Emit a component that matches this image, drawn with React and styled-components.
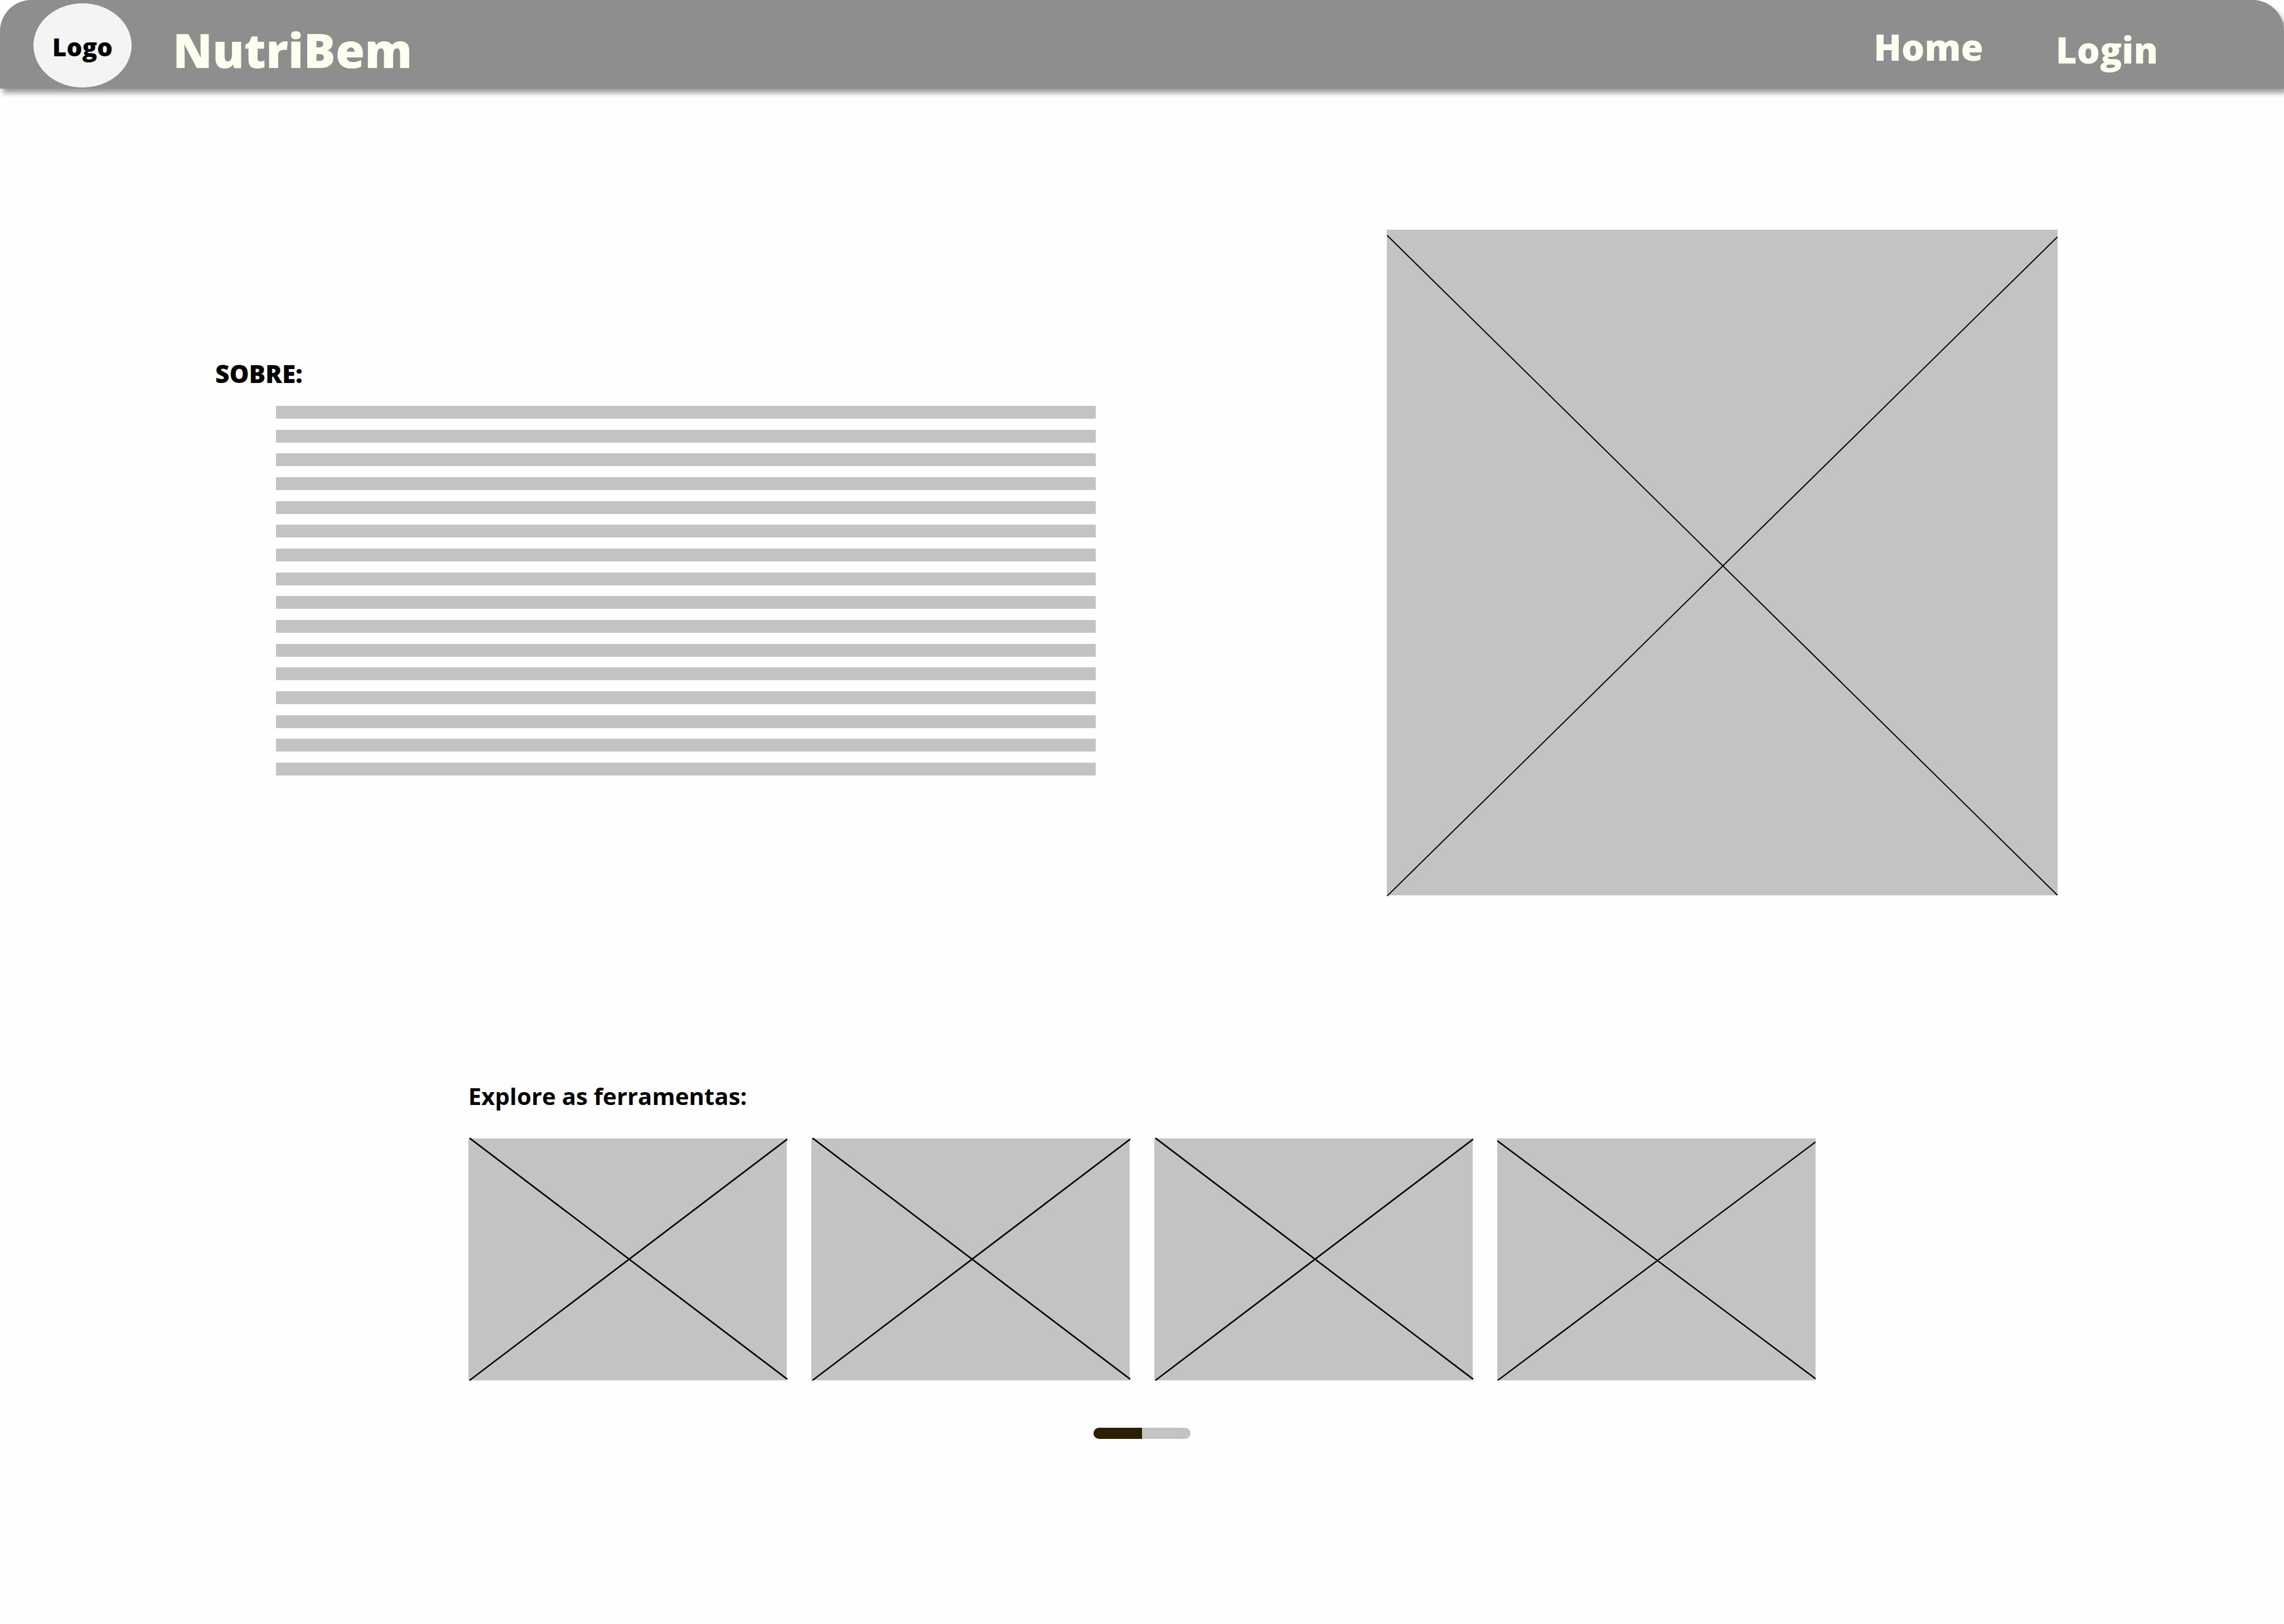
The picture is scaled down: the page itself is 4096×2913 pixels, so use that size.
import React from "react";
import styled, { createGlobalStyle } from "styled-components";

const GlobalStyle = createGlobalStyle`
  * { box-sizing: border-box; }
  body {
    margin: 0;
    background: #fefefe;
    color: #000;
    font-family: "Open Sans", "Noto Sans", sans-serif;
  }
`;

const Page = styled.div`
  display: flex;
  flex-direction: column;
  min-height: 100vh;
  overflow-x: hidden;
`;

const Header = styled.header`
  display: flex;
  align-items: center;
  height: 159px;
  padding: 3px 226px 0 60px;
  background: #8e8e8e;
  border-radius: 56px 56px 0 0;
  box-shadow: 5px 8px 8px rgba(0, 0, 0, 0.38);
`;

const Logo = styled.a`
  display: flex;
  align-items: center;
  justify-content: center;
  width: 176px;
  height: 151px;
  padding-top: 5px;
  border-radius: 50%;
  background: #f4f4f4;
  color: #000;
  font-size: 44px;
  font-weight: 800;
  text-decoration: none;
`;

const Brand = styled.h1`
  margin: 0 auto 0 74px;
  padding-top: 16px;
  color: #fffff0;
  font-size: 85px;
  line-height: 100px;
  font-weight: 800;
`;

const Nav = styled.nav`
  display: flex;
  align-items: center;
  gap: 130px;
`;

const NavLink = styled.a`
  padding-top: ${(p) => (p.$low ? "16px" : "5px")};
  color: #fffff0;
  font-size: 65px;
  line-height: 80px;
  font-weight: 800;
  text-decoration: none;
`;

const Hero = styled.section`
  display: flex;
  align-items: flex-start;
  justify-content: space-between;
  padding: 253px 406px 0 386px;
`;

const About = styled.div`
  width: 47.8%;
  padding-top: 228px;
`;

const Title = styled.h2`
  margin: 0;
  font-size: ${(p) => (p.$strong ? "44px" : "42px")};
  line-height: 60px;
  font-weight: ${(p) => (p.$strong ? 800 : 700)};
`;

const Lines = styled.div`
  display: flex;
  flex-direction: column;
  justify-content: space-between;
  height: 663px;
  margin-top: 28px;
  padding-left: 109px;
`;

const Line = styled.div`
  height: 23px;
  background: #c3c3c3;
`;

const Cover = styled.div`
  width: 36.4%;
`;

const Frame = styled.svg`
  display: block;
  width: 100%;
  height: auto;
  background: #c3c3c3;
  overflow: ${(p) => (p.$clip ? "hidden" : "visible")};
  stroke: #000;
`;

const Tools = styled.section`
  display: flex;
  flex-direction: column;
  width: 59%;
  margin: 330px auto 0;
`;

const Cards = styled.div`
  display: grid;
  grid-template-columns: repeat(4, 1fr);
  gap: 44px;
  margin-top: 46px;
`;

const Pager = styled.div`
  display: flex;
  align-self: center;
  margin-top: 85px;
  border-radius: 10px;
  overflow: hidden;
`;

const PageButton = styled.button`
  width: 87px;
  height: 20px;
  padding: 0;
  border: 0;
  background: ${(p) => (p.$active ? "#2d1d02" : "#c3c3c3")};
`;

const coverLines = [
  [1, 15, 1763, 1750],
  [1, 1752, 1763, 19],
];

const cardLines = [
  [3, -1, 838, 633],
  [3, 636, 838, 2],
];

const lastCardLines = [
  [0, 6, 837, 632],
  [0, 637, 837, 9],
];

function Placeholder({ width, height, lines, stroke, label, clip }) {
  return (
    <Frame viewBox={`0 0 ${width} ${height}`} role="img" aria-label={label} $clip={clip}>
      {lines.map(([x1, y1, x2, y2]) => (
        <line key={y1} x1={x1} y1={y1} x2={x2} y2={y2} strokeWidth={stroke} />
      ))}
    </Frame>
  );
}

export default function App() {
  return (
    <Page>
      <GlobalStyle />
      <Header>
        <Logo href="#">Logo</Logo>
        <Brand>NutriBem</Brand>
        <Nav>
          <NavLink href="#">Home</NavLink>
          <NavLink href="#" $low>Login</NavLink>
        </Nav>
      </Header>
      <main>
        <Hero>
          <About>
            <Title $strong>SOBRE:</Title>
            <Lines>
              {Array.from({ length: 16 }, (_, i) => (
                <Line key={i} />
              ))}
            </Lines>
          </About>
          <Cover>
            <Placeholder width={1763} height={1751} lines={coverLines} stroke={3} label="NutriBem" />
          </Cover>
        </Hero>
        <Tools>
          <Title>Explore as ferramentas:</Title>
          <Cards>
            {[1, 2, 3].map((n) => (
              <Placeholder key={n} width={837} height={635} lines={cardLines} stroke={4} label={`Ferramenta ${n}`} />
            ))}
            <Placeholder width={837} height={635} lines={lastCardLines} stroke={3.6} label="Ferramenta 4" clip />
          </Cards>
          <Pager>
            <PageButton type="button" aria-label="Página 1" $active />
            <PageButton type="button" aria-label="Página 2" />
          </Pager>
        </Tools>
      </main>
    </Page>
  );
}
